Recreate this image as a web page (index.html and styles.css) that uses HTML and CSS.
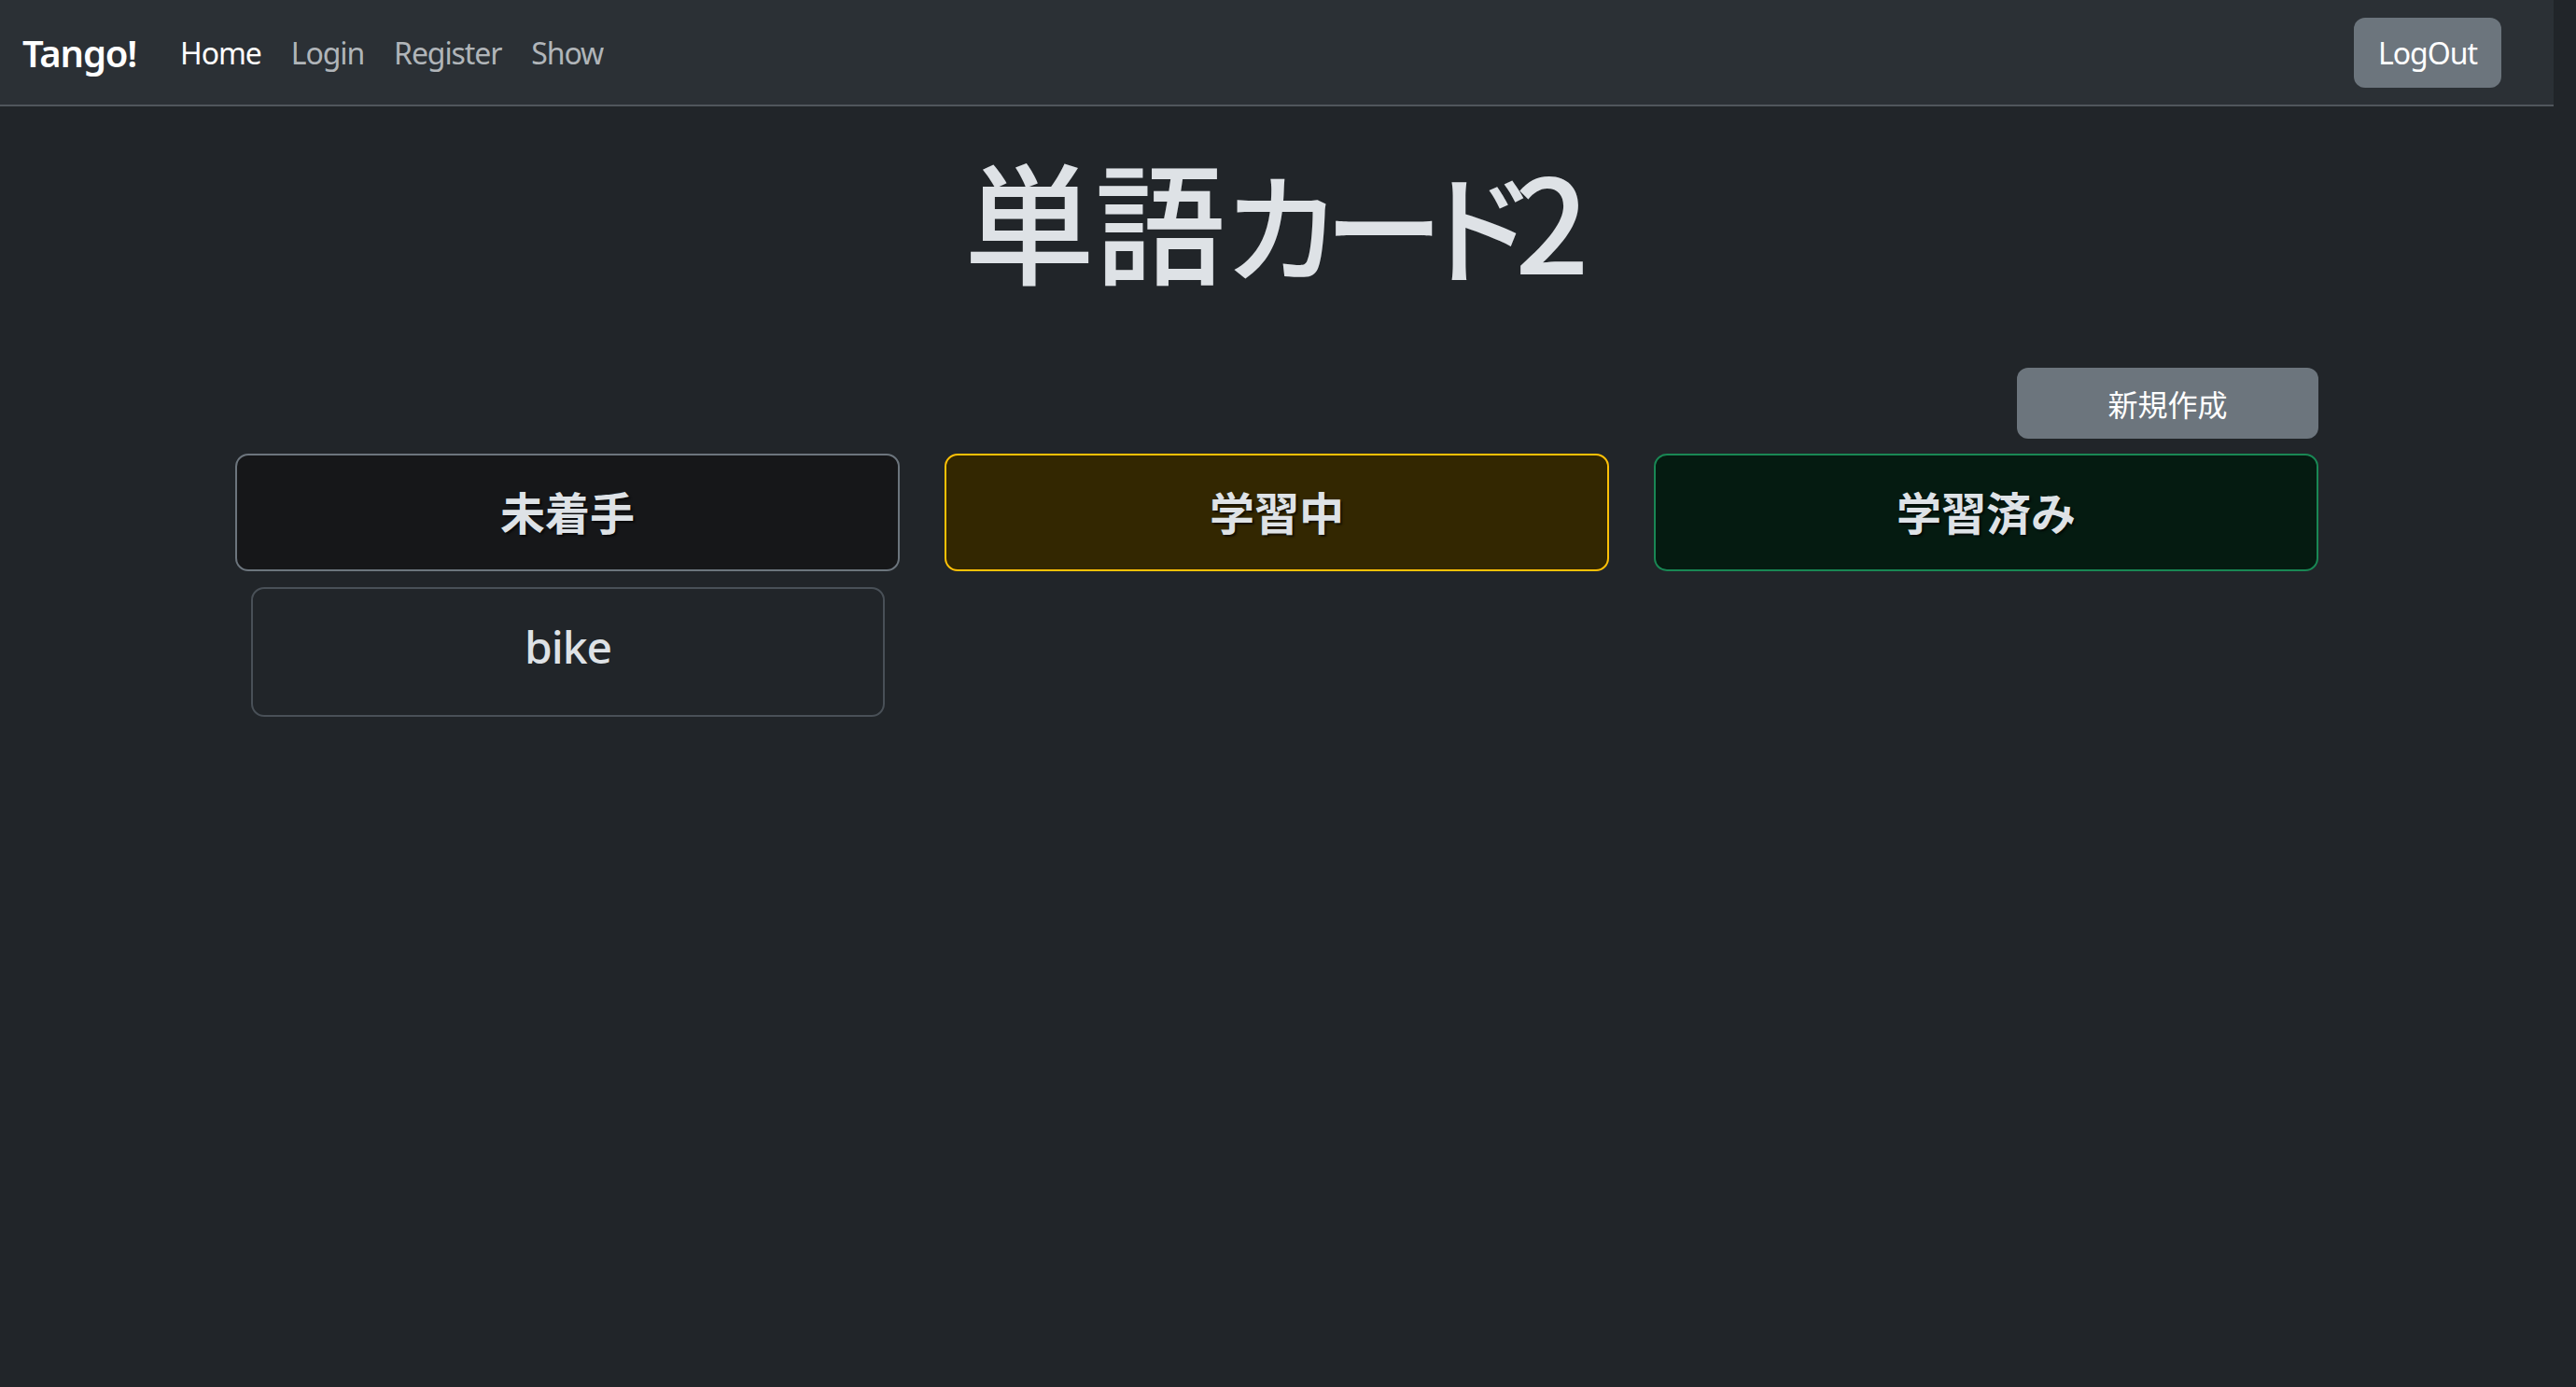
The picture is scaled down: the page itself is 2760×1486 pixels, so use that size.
FILE: index.html
```html
<!DOCTYPE html>
<html lang="ja">
<head>
<meta charset="utf-8">
<title>Tango!</title>
<link rel="stylesheet" href="styles.css">
</head>
<body>
<nav class="navbar">
  <a class="brand" href="#">Tango!</a>
  <ul class="nav">
    <li><a class="nav-link active" href="#">Home</a></li>
    <li><a class="nav-link" href="#">Login</a></li>
    <li><a class="nav-link" href="#">Register</a></li>
    <li><a class="nav-link" href="#">Show</a></li>
  </ul>
  <button class="btn btn-logout" type="button">LogOut</button>
</nav>
<main class="container">
  <h1 class="title">単語<span class="kana">カード</span>2</h1>
  <div class="toolbar">
    <button class="btn btn-new" type="button">新規作成</button>
  </div>
  <div class="board">
    <section class="column">
      <div class="col-head head-todo">未着手</div>
      <div class="word-card">bike</div>
    </section>
    <section class="column">
      <div class="col-head head-doing">学習中</div>
    </section>
    <section class="column">
      <div class="col-head head-done">学習済み</div>
    </section>
  </div>
</main>
</body>
</html>
```
FILE: styles.css
```css
html, body {
  background: #212529;
}
body {
  margin: 0 24px 0 0;
  color: #dee2e6;
  font-family: "Segoe UI", "Noto Sans", "Noto Sans CJK JP", sans-serif;
  min-height: 1486px;
}
.navbar {
  display: flex;
  align-items: center;
  height: 112px;
  padding: 0 56px 0 24px;
  background: #2b3035;
  border-bottom: 2px solid #50565c;
}
.brand {
  font-size: 40px;
  font-weight: 600;
  color: #fff;
  text-decoration: none;
  margin-right: 31px;
  letter-spacing: -1.2px;
}
.nav {
  display: flex;
  list-style: none;
  margin: 0;
  padding: 0;
}
.nav-link {
  display: block;
  padding: 0 16px;
  font-size: 32px;
  color: rgba(222, 226, 230, 0.75);
  text-decoration: none;
  letter-spacing: -1.1px;
}
.nav-link.active {
  color: #fff;
}
.btn {
  border: none;
  border-radius: 12px;
  background: #6c757d;
  color: #fff;
  font-family: "Segoe UI", "Noto Sans", "Noto Sans CJK JP", sans-serif;
  font-size: 32px;
  padding: 0;
  display: flex;
  align-items: center;
  justify-content: center;
}
.btn-logout {
  margin-left: auto;
  width: 158px;
  height: 75px;
  letter-spacing: -1px;
}
.container {
  width: 2232px;
  margin: 0 auto;
}
.title {
  margin: 35px 0 0;
  height: 168px;
  text-align: center;
  font-size: 140px;
  line-height: 168px;
  font-weight: 500;
  font-family: "Noto Sans CJK JP", sans-serif;
  font-feature-settings: "palt";
  color: #dee2e6;
}
.kana {
  font-size: 128px;
  line-height: 1;
  letter-spacing: -12px;
}
.toolbar {
  display: flex;
  justify-content: flex-end;
  margin-top: 77px;
}
.btn-new {
  width: 323px;
  height: 76px;
  font-family: "Noto Sans CJK JP", sans-serif;
}
.board {
  display: grid;
  grid-template-columns: repeat(3, 1fr);
  column-gap: 48px;
  margin-top: 16px;
  align-items: start;
}
.col-head {
  height: 126px;
  box-sizing: border-box;
  border: 2px solid;
  border-radius: 14px;
  display: flex;
  align-items: center;
  justify-content: center;
  padding-bottom: 5px;
  font-family: "Noto Sans CJK JP", sans-serif;
  font-size: 48px;
  font-weight: 700;
  color: #dee2e6;
  text-shadow: 2px 2px 2px rgba(0, 0, 0, 0.6);
}
.head-todo {
  background: #161719;
  border-color: #6c757d;
}
.head-doing {
  background: #332701;
  border-color: #ffc107;
}
.head-done {
  background: #051b11;
  border-color: #198754;
}
.word-card {
  margin: 17px 16px 0 17px;
  height: 139px;
  box-sizing: border-box;
  border: 2px solid #495057;
  border-radius: 14px;
  display: flex;
  align-items: center;
  justify-content: center;
  padding-bottom: 12px;
  font-size: 48px;
  font-weight: 500;
  letter-spacing: -1px;
  color: #dee2e6;
}
```
